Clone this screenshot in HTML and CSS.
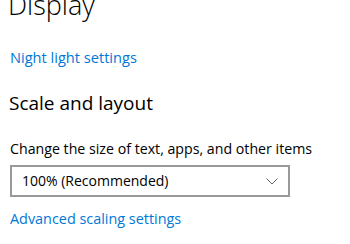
FILE: index.html
```html
<!DOCTYPE html>
<html lang="en">
<head>
    <meta charset="UTF-8">
    <title>Settings - Display</title>
    <link rel="stylesheet" href="styles.css">
</head>
<body>
    <div class="settings-page">
        <h1 class="page-title">Display</h1>

        <a class="link" href="#">Night light settings</a>

        <h2 class="section-title">Scale and layout</h2>

        <div class="field-label">Change the size of text, apps, and other items</div>
        <div class="select-box">
            <span class="select-value">100% (Recommended)</span>
            <svg class="chevron" width="12" height="7" viewBox="0 0 12 7">
                <polyline points="0.5,0.5 6,6 11.5,0.5" fill="none" stroke="#666" stroke-width="1"/>
            </svg>
        </div>

        <a class="link link-bottom" href="#">Advanced scaling settings</a>
    </div>
</body>
</html>
```

FILE: styles.css
```css
/* Base */
body, html {
    margin: 0;
    padding: 0;
    background: #fff;
    color: #000;
    font-family: 'Open Sans', 'Noto Sans', sans-serif;
    overflow: hidden;
}

.settings-page {
    display: flex;
    flex-direction: column;
    align-items: flex-start;
    padding: 0 10px;
}

/* Headings */
.page-title {
    margin: -12px 0 0 -2px;
    font-size: 27px;
    line-height: 33px;
    font-weight: 300;
}

.section-title {
    margin: 23px 0 0 -1px;
    font-size: 19px;
    line-height: 27px;
    font-weight: 400;
}

/* Links */
.link {
    margin-top: 26px;
    font-size: 14.6px;
    line-height: 20px;
    color: #0078d7;
    text-decoration: none;
}

.link-bottom {
    margin-top: 12px;
    font-size: 14.4px;
}

/* Dropdown */
.field-label {
    margin-top: 22px;
    font-size: 14.2px;
    line-height: 20px;
}

.select-box {
    box-sizing: border-box;
    margin-top: 6px;
    width: 280px;
    height: 32px;
    border: 2px solid #999;
    padding: 0 10px 0 10px;
    display: flex;
    align-items: center;
    justify-content: space-between;
}

.select-value {
    font-size: 14px;
    line-height: 20px;
}

.chevron {
    display: block;
}
```
